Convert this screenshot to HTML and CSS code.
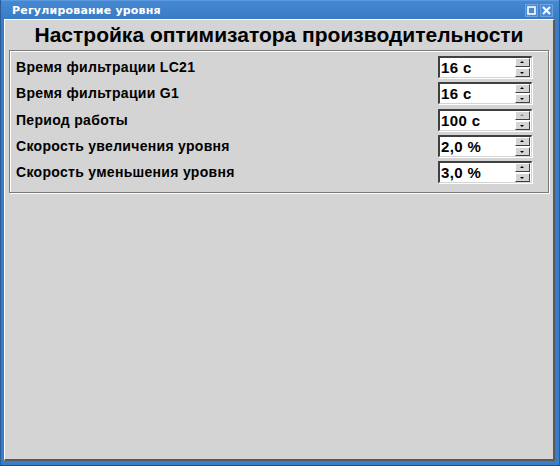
FILE: index.html
```html
<!DOCTYPE html>
<html lang="ru">
<head>
  <meta charset="UTF-8" />
  <title>Регулирование уровня</title>
  <link rel="stylesheet" href="styles.css">
</head>
<body>
  <div class="window">
    <div class="titlebar">
      <span class="caption">Регулирование уровня</span>
      <div class="tb_buttons">
        <span class="tb_btn">
          <svg width="11" height="11" viewBox="0 0 11 11"><rect x="2" y="2" width="7" height="7" fill="none" stroke="#fff" stroke-width="1.6"/></svg>
        </span>
        <span class="tb_btn">
          <svg width="11" height="11" viewBox="0 0 11 11"><path d="M2 2 L9 9 M9 2 L2 9" stroke="#fff" stroke-width="2"/></svg>
        </span>
      </div>
    </div>

    <div class="client">
      <h1>Настройка оптимизатора производительности</h1>

      <div class="group">
        <div class="row">
          <span class="label">Время фильтрации LC21</span>
          <div class="spin">
            <span class="spin_value">16 c</span>
            <div class="spin_arrows">
              <span class="arrow up"></span>
              <span class="arrow down"></span>
            </div>
          </div>
        </div>
        <div class="row">
          <span class="label">Время фильтрации G1</span>
          <div class="spin">
            <span class="spin_value">16 c</span>
            <div class="spin_arrows">
              <span class="arrow up"></span>
              <span class="arrow down"></span>
            </div>
          </div>
        </div>
        <div class="row">
          <span class="label">Период работы</span>
          <div class="spin">
            <span class="spin_value">100 c</span>
            <div class="spin_arrows">
              <span class="arrow up off"></span>
              <span class="arrow down"></span>
            </div>
          </div>
        </div>
        <div class="row">
          <span class="label">Скорость увеличения уровня</span>
          <div class="spin">
            <span class="spin_value">2,0 %</span>
            <div class="spin_arrows">
              <span class="arrow up"></span>
              <span class="arrow down"></span>
            </div>
          </div>
        </div>
        <div class="row">
          <span class="label">Скорость уменьшения уровня</span>
          <div class="spin">
            <span class="spin_value">3,0 %</span>
            <div class="spin_arrows">
              <span class="arrow up"></span>
              <span class="arrow down"></span>
            </div>
          </div>
        </div>
      </div>
    </div>
  </div>
</body>
</html>
```

FILE: styles.css
```css
body {
  margin: 0;
  font-family: "Liberation Sans", Arial, sans-serif;
  color: #000;
  background: #d4d4d4;
}

.window {
  width: 560px;
  height: 466px;
  box-sizing: border-box;
  display: flex;
  flex-direction: column;
  background: #3b7cc8;
  border-left: 1px solid #2a5c9c;
  border-right: 1px solid #2a5c9c;
  border-bottom: 1px solid #1f4c86;
  padding: 0 4px 4px 3px;
}

.titlebar {
  height: 19px;
  display: flex;
  align-items: center;
  justify-content: space-between;
  background: linear-gradient(#4688d2, #3a7bc6);
  margin: 0 -4px 0 -3px;
  padding: 0 6px 0 11px;
  border-top: 1px solid #5c9ae0;
  box-sizing: border-box;
}

.caption {
  font-family: "DejaVu Sans", sans-serif;
  font-weight: bold;
  font-size: 11px;
  color: #fff;
  letter-spacing: 0.2px;
}

.tb_buttons {
  display: flex;
  gap: 2px;
}

.tb_btn {
  width: 11px;
  height: 11px;
  display: flex;
  border: 1px solid #6da3e0;
  background: #4a8bd3;
}

.client {
  flex: 1;
  background: #d4d4d4;
  border-top: 1px solid #fff;
  border-left: 1px solid #fff;
  border-right: 2px solid #5a5a5a;
  border-bottom: 2px solid #5a5a5a;
  padding: 0 4px;
}

h1 {
  margin: 0;
  padding: 4px 0 4px;
  text-align: center;
  font-size: 21px;
  line-height: 22px;
  font-weight: bold;
}

.group {
  border: 1px solid #7a7a7a;
  box-shadow: 1px 1px 0 #fff, inset 1px 1px 0 #fff;
  padding: 3px 16px 7px 6px;
}

.row {
  display: flex;
  align-items: center;
  justify-content: space-between;
  height: 26.3px;
}

.label {
  font-size: 14px;
  font-weight: bold;
  letter-spacing: 0.3px;
}

.spin {
  width: 94px;
  height: 22px;
  box-sizing: border-box;
  display: flex;
  align-items: center;
  background: #fff;
  border-top: 2px solid #404040;
  border-left: 2px solid #404040;
  border-right: 1px solid #d4d4d4;
  border-bottom: 1px solid #d4d4d4;
  box-shadow: 1px 1px 0 #fff;
}

.spin_value {
  flex: 1;
  font-size: 15px;
  font-weight: bold;
  letter-spacing: 0.4px;
  padding-left: 1px;
}

.spin_arrows {
  display: flex;
  flex-direction: column;
  gap: 1px;
  margin-right: 1px;
}

.arrow {
  width: 15px;
  height: 9px;
  box-sizing: border-box;
  background: #d4d4d4;
  border-top: 1px solid #fff;
  border-left: 1px solid #fff;
  border-right: 1px solid #404040;
  border-bottom: 1px solid #404040;
  position: relative;
}

.arrow::after {
  content: "";
  position: absolute;
  left: 4px;
  border-left: 2px solid transparent;
  border-right: 2px solid transparent;
}

.arrow.up::after {
  top: 2px;
  border-bottom: 2px solid #000;
}

.arrow.down::after {
  top: 3px;
  border-top: 2px solid #000;
}

.arrow.off::after {
  border-bottom-color: #8a8a8a;
}
```
